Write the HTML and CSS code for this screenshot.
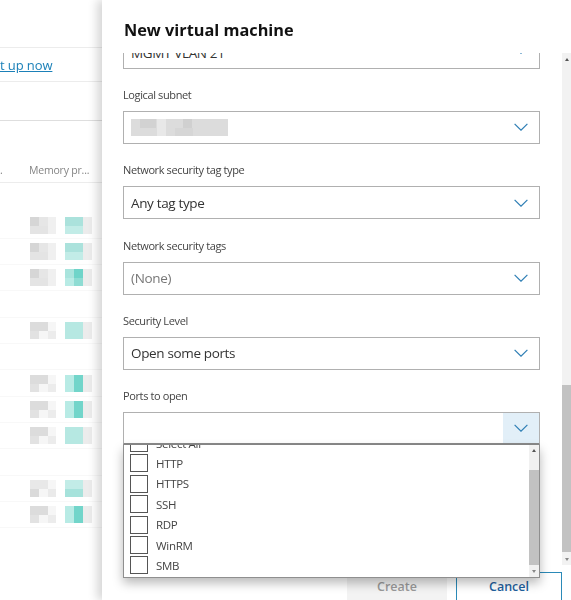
FILE: index.html
```html
<!DOCTYPE html>
<html lang="en">
<head>
<meta charset="utf-8">
<title>New virtual machine</title>
<link rel="stylesheet" href="styles.css">
</head>
<body>
<div class="app">
  <aside class="page">
    <div class="page-top"></div>
    <div class="page-link"><a href="#">t up now</a></div>
    <div class="page-bar"></div>
    <div class="table-head"><span class="dot">.</span><span class="col">Memory pr...</span></div>
    <div class="row-gap"></div>
    <div class="row"><i class="g g1"></i><i class="t t1"></i></div>
    <div class="row"><i class="g g1"></i><i class="t t1"></i></div>
    <div class="row"><i class="g g1"></i><i class="t t2"></i></div>
    <div class="row"></div>
    <div class="row"><i class="g g2"></i><i class="t t3"></i></div>
    <div class="row"></div>
    <div class="row"><i class="g g2"></i><i class="t t4"></i></div>
    <div class="row"><i class="g g2"></i><i class="t t4"></i></div>
    <div class="row"><i class="g g2"></i><i class="t t3"></i></div>
    <div class="row"></div>
    <div class="row"><i class="g g3"></i><i class="t t5"></i></div>
    <div class="row"><i class="g g2"></i><i class="t t4"></i></div>
  </aside>

  <main class="panel">
    <h1 class="title">New virtual machine</h1>
    <div class="panel-mid">
      <div class="form">
        <div class="select first">
          <span class="value">MGMT VLAN 21</span>
          <span class="chev"><svg viewBox="0 0 14 8" width="14" height="8"><path d="M.6.8 7 7.2 13.4.8"/></svg></span>
        </div>
        <div class="gap"></div>

        <div class="field">
          <label class="label">Logical subnet</label>
          <div class="select">
            <span class="mosaic"></span>
            <span class="chev"><svg viewBox="0 0 14 8" width="14" height="8"><path d="M.6.8 7 7.2 13.4.8"/></svg></span>
          </div>
        </div>

        <div class="field">
          <label class="label">Network security tag type</label>
          <div class="select">
            <span class="value">Any tag type</span>
            <span class="chev"><svg viewBox="0 0 14 8" width="14" height="8"><path d="M.6.8 7 7.2 13.4.8"/></svg></span>
          </div>
        </div>

        <div class="field">
          <label class="label">Network security tags</label>
          <div class="select">
            <span class="value muted">(None)</span>
            <span class="chev"><svg viewBox="0 0 14 8" width="14" height="8"><path d="M.6.8 7 7.2 13.4.8"/></svg></span>
          </div>
        </div>

        <div class="field">
          <label class="label">Security Level</label>
          <div class="select">
            <span class="value">Open some ports</span>
            <span class="chev"><svg viewBox="0 0 14 8" width="14" height="8"><path d="M.6.8 7 7.2 13.4.8"/></svg></span>
          </div>
        </div>

        <div class="field">
          <label class="label">Ports to open</label>
          <div class="select open">
            <span class="chev"><svg viewBox="0 0 14 8" width="14" height="8"><path d="M.6.8 7 7.2 13.4.8"/></svg></span>
          </div>
        </div>
      </div>
      <div class="scroll">
        <span class="arrow up"></span>
        <span class="thumb"></span>
        <span class="arrow down"></span>
      </div>
    </div>
    <div class="footer">
      <button class="btn create" type="button">Create</button>
      <button class="btn cancel" type="button">Cancel</button>
    </div>

    <div class="dropdown">
      <ul class="options">
        <li class="opt"><span class="box"></span>Select All</li>
        <li class="opt"><span class="box"></span>HTTP</li>
        <li class="opt"><span class="box"></span>HTTPS</li>
        <li class="opt"><span class="box"></span>SSH</li>
        <li class="opt"><span class="box"></span>RDP</li>
        <li class="opt"><span class="box"></span>WinRM</li>
        <li class="opt"><span class="box"></span>SMB</li>
      </ul>
      <div class="dd-scroll">
        <span class="arrow up"></span>
        <span class="dd-thumb"></span>
        <span class="arrow down"></span>
      </div>
    </div>
  </main>
</div>
</body>
</html>
```
FILE: styles.css
```css
* { box-sizing: border-box; }
html, body { margin: 0; padding: 0; height: 600px; overflow: hidden; background: #fff; }
body { font-family: "Open Sans", "Noto Sans", sans-serif; color: #222; }
.app { display: flex; width: 571px; height: 600px; filter: blur(0.35px); }

/* page behind the panel */
.page { width: 102px; flex: none; overflow: hidden; font-size: 11px; color: #777; }
.page-top { height: 48px; border-bottom: 1px solid #ececec; }
.page-link { height: 34px; border-bottom: 1px solid #ececec; display: flex; align-items: center; font-size: 13px; letter-spacing: -.1px; }
.page-link a { color: #1b80b8; text-decoration: underline; }
.page-bar { height: 39px; border-bottom: 1px solid #dedede; }
.table-head { height: 62px; border-bottom: 1px solid #ececec; display: flex; align-items: flex-end; padding-bottom: 5px; color: #858585; font-size: 10.5px; letter-spacing: -.2px; }
.dot { width: 29px; }
.col { white-space: nowrap; }
.row-gap { height: 29.5px; }
.row { height: 26.33px; display: flex; align-items: center; padding-left: 30px; gap: 9px; border-bottom: 1px solid #f8f8f8; }
.g, .t { display: block; height: 17px; flex: none; }
.g { width: 26px; background-color: #f0f0f0; }
.t { width: 27px; background-color: #ececec; }
.g1 { background:
  linear-gradient(#d6d6d6,#d6d6d6) 0 0/9px 9px no-repeat,
  linear-gradient(#e6e6e6,#e6e6e6) 9px 0/9px 9px no-repeat,
  linear-gradient(#e4e4e4,#e4e4e4) 0 9px/18px 8px no-repeat,
  #f0f0f0; }
.g2 { background:
  linear-gradient(#dcdcdc,#dcdcdc) 0 0/18px 9px no-repeat,
  linear-gradient(#e2e2e2,#e2e2e2) 0 9px/9px 8px no-repeat,
  linear-gradient(#ececec,#ececec) 18px 9px/8px 8px no-repeat,
  #f6f6f6; }
.g3 { background:
  linear-gradient(#e8e8e8,#e8e8e8) 0 0/18px 9px no-repeat,
  linear-gradient(#dadada,#dadada) 0 9px/9px 8px no-repeat,
  linear-gradient(#eaeaea,#eaeaea) 18px 9px/8px 8px no-repeat,
  #f6f6f6; }
.t1 { background:
  linear-gradient(#abe2dc,#abe2dc) 0 0/18px 9px no-repeat,
  linear-gradient(#c2ece7,#c2ece7) 0 9px/18px 8px no-repeat,
  #ececec; }
.t2 { background:
  linear-gradient(#a9e4dd,#a9e4dd) 0 0/9px 9px no-repeat,
  linear-gradient(#6fd4c9,#6fd4c9) 9px 0/9px 9px no-repeat,
  linear-gradient(#b8ebe5,#b8ebe5) 0 9px/9px 8px no-repeat,
  linear-gradient(#8edcd3,#8edcd3) 9px 9px/9px 8px no-repeat,
  #ececec; }
.t3 { background:
  linear-gradient(#b6e8e2,#b6e8e2) 0 0/18px 17px no-repeat,
  #ececec; }
.t4 { background:
  linear-gradient(#b8ebe5,#b8ebe5) 0 0/9px 17px no-repeat,
  linear-gradient(#72d5ca,#72d5ca) 9px 0/9px 17px no-repeat,
  #ececec; }
.t5 { background:
  linear-gradient(#c2ece7,#c2ece7) 0 0/18px 9px no-repeat,
  linear-gradient(#a6e2db,#a6e2db) 0 9px/18px 8px no-repeat,
  #ececec; }

/* side panel */
.panel { position: relative; flex: 1; min-width: 0; height: 600px; background: #fff; display: flex; flex-direction: column; box-shadow: -5px 0 9px rgba(0,0,0,.16); }
.title { margin: 0; height: 53px; flex: none; padding: 18px 0 0 22px; font-size: 16.3px; line-height: 24px; font-weight: 700; color: #111; letter-spacing: 0; }
.panel-mid { height: 512px; flex: none; display: flex; overflow: hidden; }
.form { width: 460px; flex: none; padding-left: 21px; overflow: hidden; }
.field { height: 75.33px; }
.gap { height: 17.9px; }
.label { display: block; height: 16px; margin-bottom: 8px; font-size: 11px; line-height: 16px; color: #444; letter-spacing: -.38px; }
.select { width: 417px; height: 33px; border: 1.5px solid #b0b0b0; display: flex; align-items: center; justify-content: space-between; padding-left: 7px; background: #fff; }
.select.first { margin-top: -17px; }
.select.first .chev { padding-bottom: 6px; }
.value { font-size: 13.5px; line-height: 20px; color: #333; letter-spacing: -.35px; }
.value.muted { color: #777; }
.chev { width: 36px; height: 100%; display: flex; align-items: center; justify-content: center; flex: none; margin-left: auto; }
.chev svg { display: block; }
.chev path { fill: none; stroke: #2f7fb5; stroke-width: 1.2; }
.select.open { border-top-color: #b0b0b0; border-bottom: 2px solid #8a8a8a; }
.select.open .chev { background: #e2eff8; }
.mosaic { width: 97px; height: 17px; background:
  linear-gradient(#d2d2d2,#d2d2d2) 9px 0/16px 9px no-repeat,
  linear-gradient(#d6d6d6,#d6d6d6) 44px 9px/18px 8px no-repeat,
  linear-gradient(#d0d0d0,#d0d0d0) 52px 0/9px 9px no-repeat,
  linear-gradient(#e8e8e8,#e8e8e8) 26px 0/9px 17px no-repeat,
  #dcdcdc; }

.scroll { width: 9px; margin-left: 0; flex: none; background: #f2f2f2; display: flex; flex-direction: column; align-items: stretch; position: relative; }
.arrow { height: 12px; flex: none; display: flex; align-items: center; justify-content: center; }
.arrow::before { content: ""; border-left: 2.5px solid transparent; border-right: 2.5px solid transparent; }
.arrow.up::before { border-bottom: 3px solid #555; }
.arrow.down::before { border-top: 3px solid #888; }
.scroll .thumb { display: block; flex: none; width: 100%; height: 167px; margin-top: 320px; background: #c2c2c2; }
.scroll .arrow.down { margin-top: auto; }

.footer { flex: 1; display: flex; justify-content: flex-end; align-items: flex-start; gap: 9px; padding: 7px 9px 0 0; }
.btn { height: 30px; font: 600 12.5px/1 "Open Sans", sans-serif; padding: 0; }
.create { width: 100px; background: #f3f3f3; border: none; color: #9a9a9a; }
.cancel { width: 106px; background: #fff; border: 1px solid #2b8ab8; color: #1f5f9e; }

/* open dropdown */
.dropdown { position: absolute; left: 21px; top: 444.5px; width: 417px; height: 133.5px; background: #fff; border: 1px solid #8f8f8f; border-top: none; display: flex; overflow: hidden; box-shadow: 0 5px 10px rgba(0,0,0,.28); }
.options { list-style: none; margin: -11.6px 0 0; padding: 0 0 0 6px; flex: 1; }
.opt { height: 20.4px; display: flex; align-items: center; gap: 8px; font-size: 11.5px; color: #444; letter-spacing: -.3px; }
.box { width: 18px; height: 18px; flex: none; border: 1.4px solid #555; background: #fff; }
.dd-scroll { width: 10px; flex: none; margin-right: 0; background: #f1f1f1; display: flex; flex-direction: column; }
.dd-thumb { display: block; flex: none; height: 95px; margin-top: 13px; background: #c2c2c2; }
.dd-scroll .arrow.down { margin-top: auto; }
```
